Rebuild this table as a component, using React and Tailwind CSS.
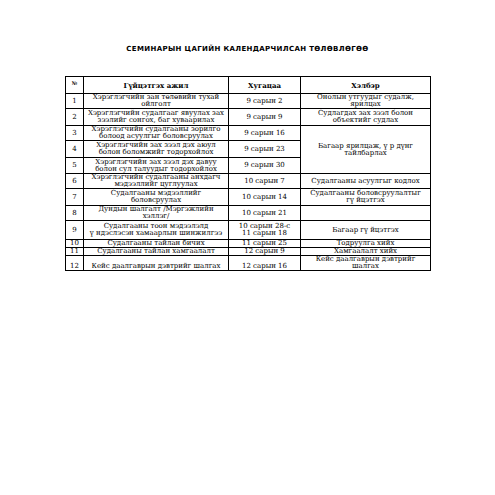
import React from "react";

const serif = { fontFamily: '"DejaVu Serif", serif' };

function Cell({ children, className = "" }) {
  return (
    <div
      className={
        "flex flex-col items-center justify-center text-center border-r border-b border-black overflow-hidden " +
        className
      }
    >
      {children}
    </div>
  );
}

function Lines({ lines }) {
  return lines.map((l, i) => (
    <div key={i} className="whitespace-nowrap">
      {l}
    </div>
  ));
}

const rows = [
  { n: "1", a: ["Хэрэглэгчийн зан төлөвийн тухай", "ойлголт"], d: ["9 сарын 2"], f: ["Онолын утгуудыг судалж,", "ярилцах"] },
  { n: "2", a: ["Хэрэглэгчийн судалгааг явуулах зах", "зээлийг сонгох, баг хуваарилах"], d: ["9 сарын 9"], f: ["Судлагдах зах зээл болон", "объектийг судлах"] },
  { n: "3", a: ["Хэрэглэгчийн судалгааны зорилго", "болоод асуулгыг боловсруулах"], d: ["9 сарын 16"], f: ["Багаар ярилцаж, ү р дүнг", "тайлбарлах"], span: true },
  { n: "4", a: ["Хэрэглэгчийн зах зээл дэх аюул", "болон боломжийг тодорхойлох"], d: ["9 сарын 23"] },
  { n: "5", a: ["Хэрэглэгчийн зах зээл дэх давуу", "болон сул талуудыг тодорхойлох"], d: ["9 сарын 30"] },
  { n: "6", a: ["Хэрэглэгчийн судалгааны анхдагч", "мэдээллийг цуглуулах"], d: ["10 сарын 7"], f: ["Судалгааны асуулгыг кодлох"] },
  { n: "7", a: ["Судалгааны мэдээллийг", "боловсруулах"], d: ["10 сарын 14"], f: ["Судалгааны боловсруулалтыг", "гү йцэтгэх"] },
  { n: "8", a: ["Дундын шалгалт /Мэргэжлийн", "хэллэг/"], d: ["10 сарын 21"], f: [""] },
  { n: "9", a: ["Судалгааны тоон мэдээлэлд", "ү ндэслэсэн хамаарлын шинжилгээ"], d: ["10 сарын 28-с", "11 сарын 18"], f: ["Багаар гү йцэтгэх"] },
  { n: "10", a: ["Судалгааны тайлан бичих"], d: ["11 сарын 25"], f: ["Тодруулга хийх"] },
  { n: "11", a: ["Судалгааны тайлан хамгаалалт"], d: ["12 сарын 9"], f: ["Хамгаалалт хийх"] },
  { n: "12", a: ["Кейс даалгаврын дэвтрийг шалгах"], d: ["12 сарын 16"], f: ["Кейс даалгаврын дэвтрийг", "шалгах"], last: true },
];

export default function App() {
  return (
    <div className="w-[495px] h-[495px] bg-white text-black">
      <div
        className="pt-[45px] h-[53px] text-center font-bold text-[7px] leading-[8px] tracking-[0.35px]"
        style={{ fontFamily: '"DejaVu Sans", sans-serif' }}
      >
        СЕМИНАРЫН ЦАГИЙН КАЛЕНДАРЧИЛСАН ТӨЛӨВЛӨГӨӨ
      </div>
      <div
        className="mt-[23px] ml-[65px] w-[366px] grid grid-cols-[18px_145px_72px_130px] grid-rows-[17px_15px_17px_15px_17px_16px_15px_17px_15px_19px_8px_8px_15px] border-l border-t border-black text-[7px] leading-[7px]"
        style={serif}
      >
        <Cell className="font-bold text-[5px] justify-start pt-[3px]">№</Cell>
        <Cell className="font-bold">Гүйцэтгэх ажил</Cell>
        <Cell className="font-bold">Хугацаа</Cell>
        <Cell className="font-bold">Хэлбэр</Cell>
        {rows.map((r) => {
          const al = r.last ? " justify-end" : "";
          return (
            <React.Fragment key={r.n}>
              <Cell className={al}>{r.n}</Cell>
              <Cell className={al}>
                <Lines lines={r.a} />
              </Cell>
              <Cell className={al}>
                <Lines lines={r.d} />
              </Cell>
              {r.f ? (
                <Cell className={(r.span ? "row-span-3" : "") + al}>
                  <Lines lines={r.f} />
                </Cell>
              ) : null}
            </React.Fragment>
          );
        })}
      </div>
    </div>
  );
}
